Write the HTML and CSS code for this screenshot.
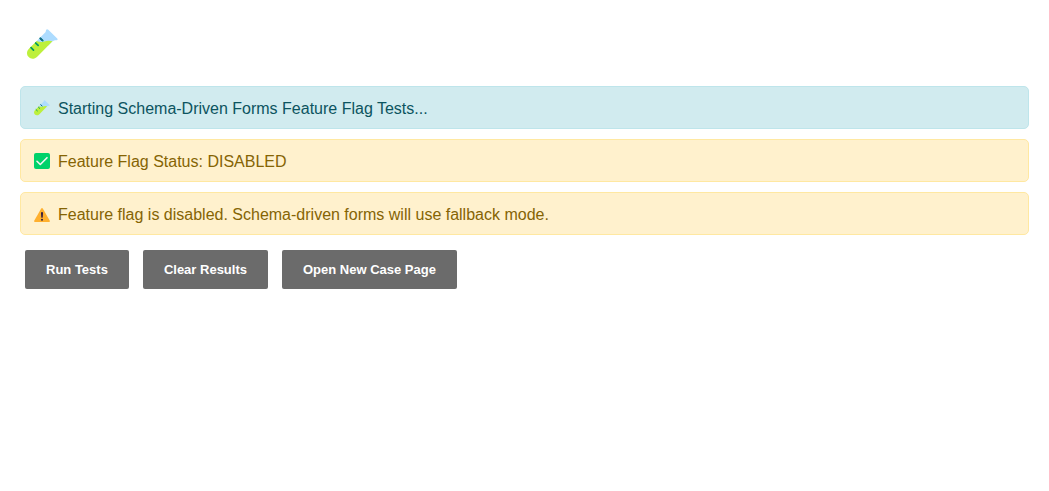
FILE: index.html
```html
<!DOCTYPE html>
<html lang="en">
<head>
<meta charset="utf-8">
<meta name="viewport" content="width=device-width, initial-scale=1">
<title>Schema-Driven Forms Feature Flag Tests</title>
<link rel="stylesheet" href="styles.css">
</head>
<body>
<svg class="defs" aria-hidden="true">
  <symbol id="tube" viewBox="0 0 32 32">
    <path fill="#addcff" d="M19.500 1.200Q20.600-.4 22 .9L31.200 9.800Q32.200 11.200 30.600 11.600C28.500 11.700 27.500 11.700 26 13L22 17 8 14.400 17.500 5Q20 3 19.500 1.200Z"/>
    <path fill="#bdf03c" d="M10 12.400Q14 14.200 18 12.900T26.300 12.700L10.800 28.300C7.600 31.500 4 31.200 1.800 29S-.9 23.400 2.200 20.200Z"/>
    <path fill="none" stroke="#009b61" stroke-width="1.800" stroke-linecap="round" d="m13.800 9.700 2.500 2.400M9 14.500l2.500 2.400M4.200 19.300l2.500 2.400"/>
    <path fill="none" stroke="#17658a" stroke-width="1.800" stroke-linecap="round" d="m13.800 9.700 1.700 1.700"/>
  </symbol>
</svg>
<main class="page">
  <h1 class="title"><svg class="title-icon" role="img" aria-label="Test tube"><use href="#tube"/></svg></h1>
  <div class="results">
    <div class="result info">
      <svg class="icon" aria-hidden="true"><use href="#tube"/></svg>
      <span>Starting Schema-Driven Forms Feature Flag Tests...</span>
    </div>
    <div class="result warning">
      <svg class="icon" viewBox="0 0 16 16" aria-hidden="true"><rect width="16" height="16" rx="2" fill="#00d26a"/><path d="m3 8.300 3.300 3.200L13 4.700" fill="none" stroke="#f4f4f4" stroke-width="1.600" stroke-linecap="round" stroke-linejoin="round"/></svg>
      <span>Feature Flag Status: DISABLED</span>
    </div>
    <div class="result warning">
      <svg class="icon" viewBox="0 0 16 16" aria-hidden="true"><path d="M7.200 2.500Q8 1.300 8.800 2.500L15.800 14.700Q16.300 16 15 16H1Q-.3 16 .2 14.700Z" fill="#ffb02e"/><path d="M7 6.700Q7 6 8 6T9 6.700L8.700 11.500Q8 12.100 7.300 11.500Z" fill="#321b41"/><circle cx="8" cy="13.700" r="1" fill="#321b41"/></svg>
      <span>Feature flag is disabled. Schema-driven forms will use fallback mode.</span>
    </div>
  </div>
  <div class="actions">
    <button class="button" type="button">Run Tests</button>
    <button class="button" type="button">Clear Results</button>
    <button class="button" type="button">Open New Case Page</button>
  </div>
</main>
</body>
</html>
```
FILE: styles.css
```css
* { box-sizing: border-box; }
body {
  margin: 0;
  background: #fff;
  font-family: "Liberation Sans", Arial, sans-serif;
  font-size: 16px;
  line-height: 19px;
}
.defs { position: absolute; width: 0; height: 0; }
.page { padding: 29px 20px 20px; }
.title { margin: 0 0 26px; padding-left: 7px; line-height: 0; }
.title-icon { display: block; width: 31px; height: 31px; }
.results { display: grid; gap: 10px; }
.result {
  display: flex;
  align-items: flex-start;
  gap: 8px;
  padding: 12px 13px 10px;
  border: 1px solid;
  border-radius: 5px;
}
.info { color: #0c5460; background: #d1ebef; border-color: #bee5eb; }
.warning { color: #856404; background: #fff1cd; border-color: #ffe8a1; }
.icon { flex: none; width: 16px; height: 16px; margin-top: 1px; }
.actions { display: flex; flex-wrap: wrap; gap: 14px; padding: 15px 5px; }
.button {
  padding: 12px 21px;
  border: 0;
  border-radius: 2px;
  background: #6b6b6b;
  color: #fff;
  font: bold 13px/15px "Liberation Sans", Arial, sans-serif;
  cursor: pointer;
}
```
